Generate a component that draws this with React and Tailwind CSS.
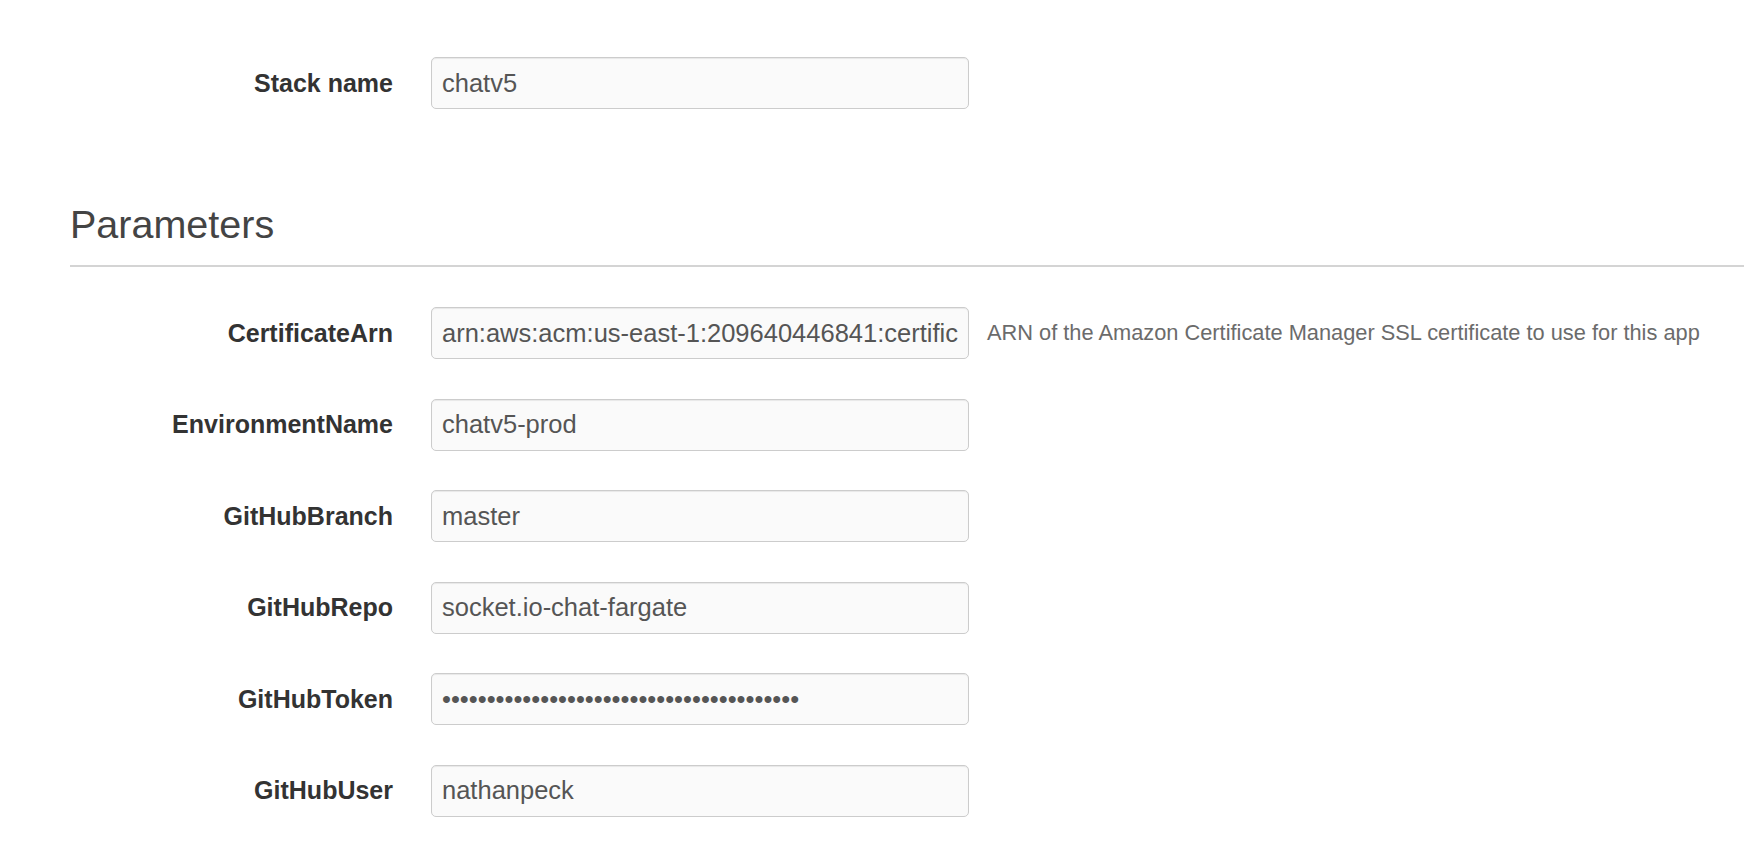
import React from "react";

const stack = { label: "Stack name", value: "chatv5" };

const params = [
  {
    label: "CertificateArn",
    value: "arn:aws:acm:us-east-1:209640446841:certific",
    help: "ARN of the Amazon Certificate Manager SSL certificate to use for this app",
  },
  { label: "EnvironmentName", value: "chatv5-prod" },
  { label: "GitHubBranch", value: "master" },
  { label: "GitHubRepo", value: "socket.io-chat-fargate" },
  { label: "GitHubToken", value: "•".repeat(40) },
  { label: "GitHubUser", value: "nathanpeck" },
];

// One label / input / help row of the form
function FieldRow({ label, value, help }) {
  return (
    <div className="flex items-center h-[52px]">
      <label className="w-[323px] shrink-0 text-right text-[25px] font-bold text-[#333] leading-none">
        {label}
      </label>
      <input
        type="text"
        readOnly
        value={value}
        className="ml-[38px] w-[538px] h-[52px] shrink-0 rounded-[5px] border border-[#ccc] bg-[#fafafa] pl-[10px] pr-[6px] text-[25.5px] text-[#555] shadow-[inset_0_1px_1px_rgba(0,0,0,0.075)] outline-none"
      />
      {help && (
        <span className="ml-[18px] whitespace-nowrap text-[21.8px] text-[#6b6b6b]">
          {help}
        </span>
      )}
    </div>
  );
}

export default function App() {
  return (
    <div className="min-h-screen w-full overflow-hidden bg-white pl-[70px] pt-[57px] font-['Liberation_Sans',Arial,sans-serif]">
      <FieldRow label={stack.label} value={stack.value} />

      <h2 className="mt-[94px] h-[43px] text-[39.5px] font-normal leading-[43px] text-[#444]">
        Parameters
      </h2>
      <div className="mt-[19px] h-[2px] w-full bg-[#d4d4d4]" />

      <div className="mt-[40px] flex flex-col gap-[39.6px]">
        {params.map((p) => (
          <FieldRow key={p.label} {...p} />
        ))}
      </div>
    </div>
  );
}
